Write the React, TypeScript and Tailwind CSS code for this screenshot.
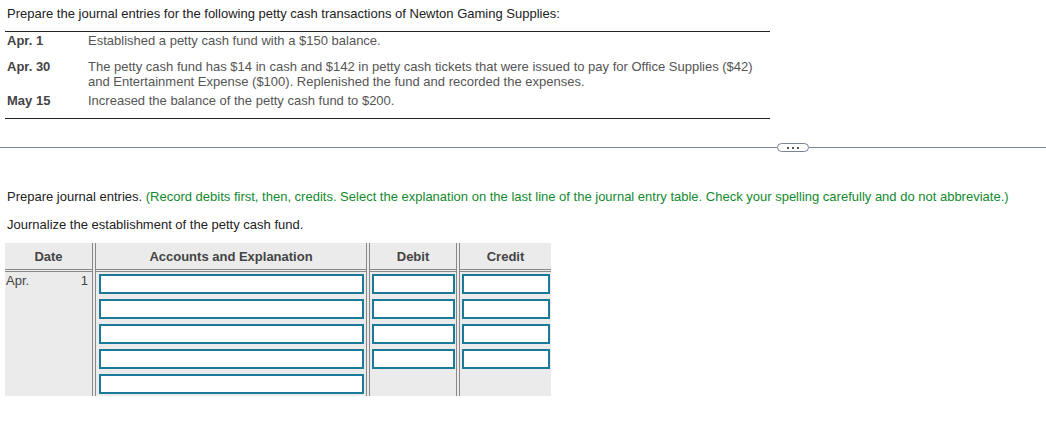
const lineColor = 'border-[#888]';

function Field({ className }: { className: string }) {
  return (
    <input
      type="text"
      className={`h-[20px] shrink-0 border-2 border-[#1a7a99] bg-white outline-none ${className}`}
    />
  );
}

function HeadCell({ label }: { label: string }) {
  return (
    <>
      <div className={`flex h-[27px] items-center justify-center border-b ${lineColor} font-bold`}>
        {label}
      </div>
      <div className={`h-[2px] border-b ${lineColor}`} />
    </>
  );
}

function Sep() {
  return <div className={`w-[4px] shrink-0 self-stretch border-x ${lineColor}`} />;
}

export default function App() {
  return (
    <div className="h-[423px] w-[1046px] overflow-hidden bg-white font-['Liberation_Sans',Arial,sans-serif] text-[13px] leading-[15px] text-[#222]">
      {/* problem statement */}
      <div className="ml-[5px] w-[765px] pt-[6px]">
        <p className="border-b border-[#222] pb-[10px] pl-[2px]">
          Prepare the journal entries for the following petty cash transactions of Newton Gaming Supplies:
        </p>
        <div className="border-b border-[#222] pb-[10px] pl-[2px] pt-[1px]">
          <div className="flex">
            <div className="w-[81px] shrink-0 font-bold text-[#444]">Apr. 1</div>
            <div className="text-[#555]">Established a petty cash fund with a $150 balance.</div>
          </div>
          <div className="mt-[11px] flex">
            <div className="w-[81px] shrink-0 font-bold text-[#444]">Apr. 30</div>
            <div className="text-[#555]">
              The petty cash fund has $14 in cash and $142 in petty cash tickets that were issued to pay for Office Supplies ($42)
              <br />
              and Entertainment Expense ($100). Replenished the fund and recorded the expenses.
            </div>
          </div>
          <div className="mt-[4px] flex">
            <div className="w-[81px] shrink-0 font-bold text-[#444]">May 15</div>
            <div className="text-[#555]">Increased the balance of the petty cash fund to $200.</div>
          </div>
        </div>
      </div>

      {/* divider with expand pill */}
      <div className="mt-[24px] flex items-center">
        <div className="h-px w-[777px] bg-[#7b8494]" />
        <div className="flex h-[9px] w-[32px] items-center justify-center gap-[3px] rounded-full border border-[#7b8494] bg-white">
          <span className="h-[2px] w-[2px] bg-[#555]" />
          <span className="h-[2px] w-[2px] bg-[#555]" />
          <span className="h-[2px] w-[2px] bg-[#555]" />
        </div>
        <div className="h-px flex-1 bg-[#7b8494]" />
      </div>

      <p className="mt-[37px] pl-[7px]">
        Prepare journal entries.{' '}
        <span className="text-[#128a2e]">
          (Record debits first, then, credits. Select the explanation on the last line of the journal entry table. Check your spelling carefully and do not abbreviate.)
        </span>
      </p>
      <p className="mt-[13px] pl-[7px]">Journalize the establishment of the petty cash fund.</p>

      {/* journal table */}
      <div className="ml-[5px] mt-[11px] flex w-[546px] bg-[#ebebeb] text-[#444]">
        <div className="flex w-[87px] shrink-0 flex-col">
          <HeadCell label="Date" />
          <div className="flex h-[124px] justify-between pl-[1px] pr-[4px] pt-[1px]">
            <span>Apr.</span>
            <span>1</span>
          </div>
        </div>
        <Sep />
        <div className="flex w-[270px] shrink-0 flex-col">
          <HeadCell label="Accounts and Explanation" />
          <div className="flex h-[124px] flex-col gap-[5px] pt-[2px]">
            {[0, 1, 2, 3, 4].map((i) => (
              <Field key={i} className="ml-[3px] w-[265px]" />
            ))}
          </div>
        </div>
        <Sep />
        <div className="flex w-[86px] shrink-0 flex-col">
          <HeadCell label="Debit" />
          <div className="flex h-[124px] flex-col gap-[5px] pt-[2px]">
            {[0, 1, 2, 3].map((i) => (
              <Field key={i} className="ml-[2px] w-[83px]" />
            ))}
          </div>
        </div>
        <Sep />
        <div className="flex w-[91px] shrink-0 flex-col">
          <HeadCell label="Credit" />
          <div className="flex h-[124px] flex-col gap-[5px] pt-[2px]">
            {[0, 1, 2, 3].map((i) => (
              <Field key={i} className="ml-[2px] w-[88px]" />
            ))}
          </div>
        </div>
      </div>
    </div>
  );
}
